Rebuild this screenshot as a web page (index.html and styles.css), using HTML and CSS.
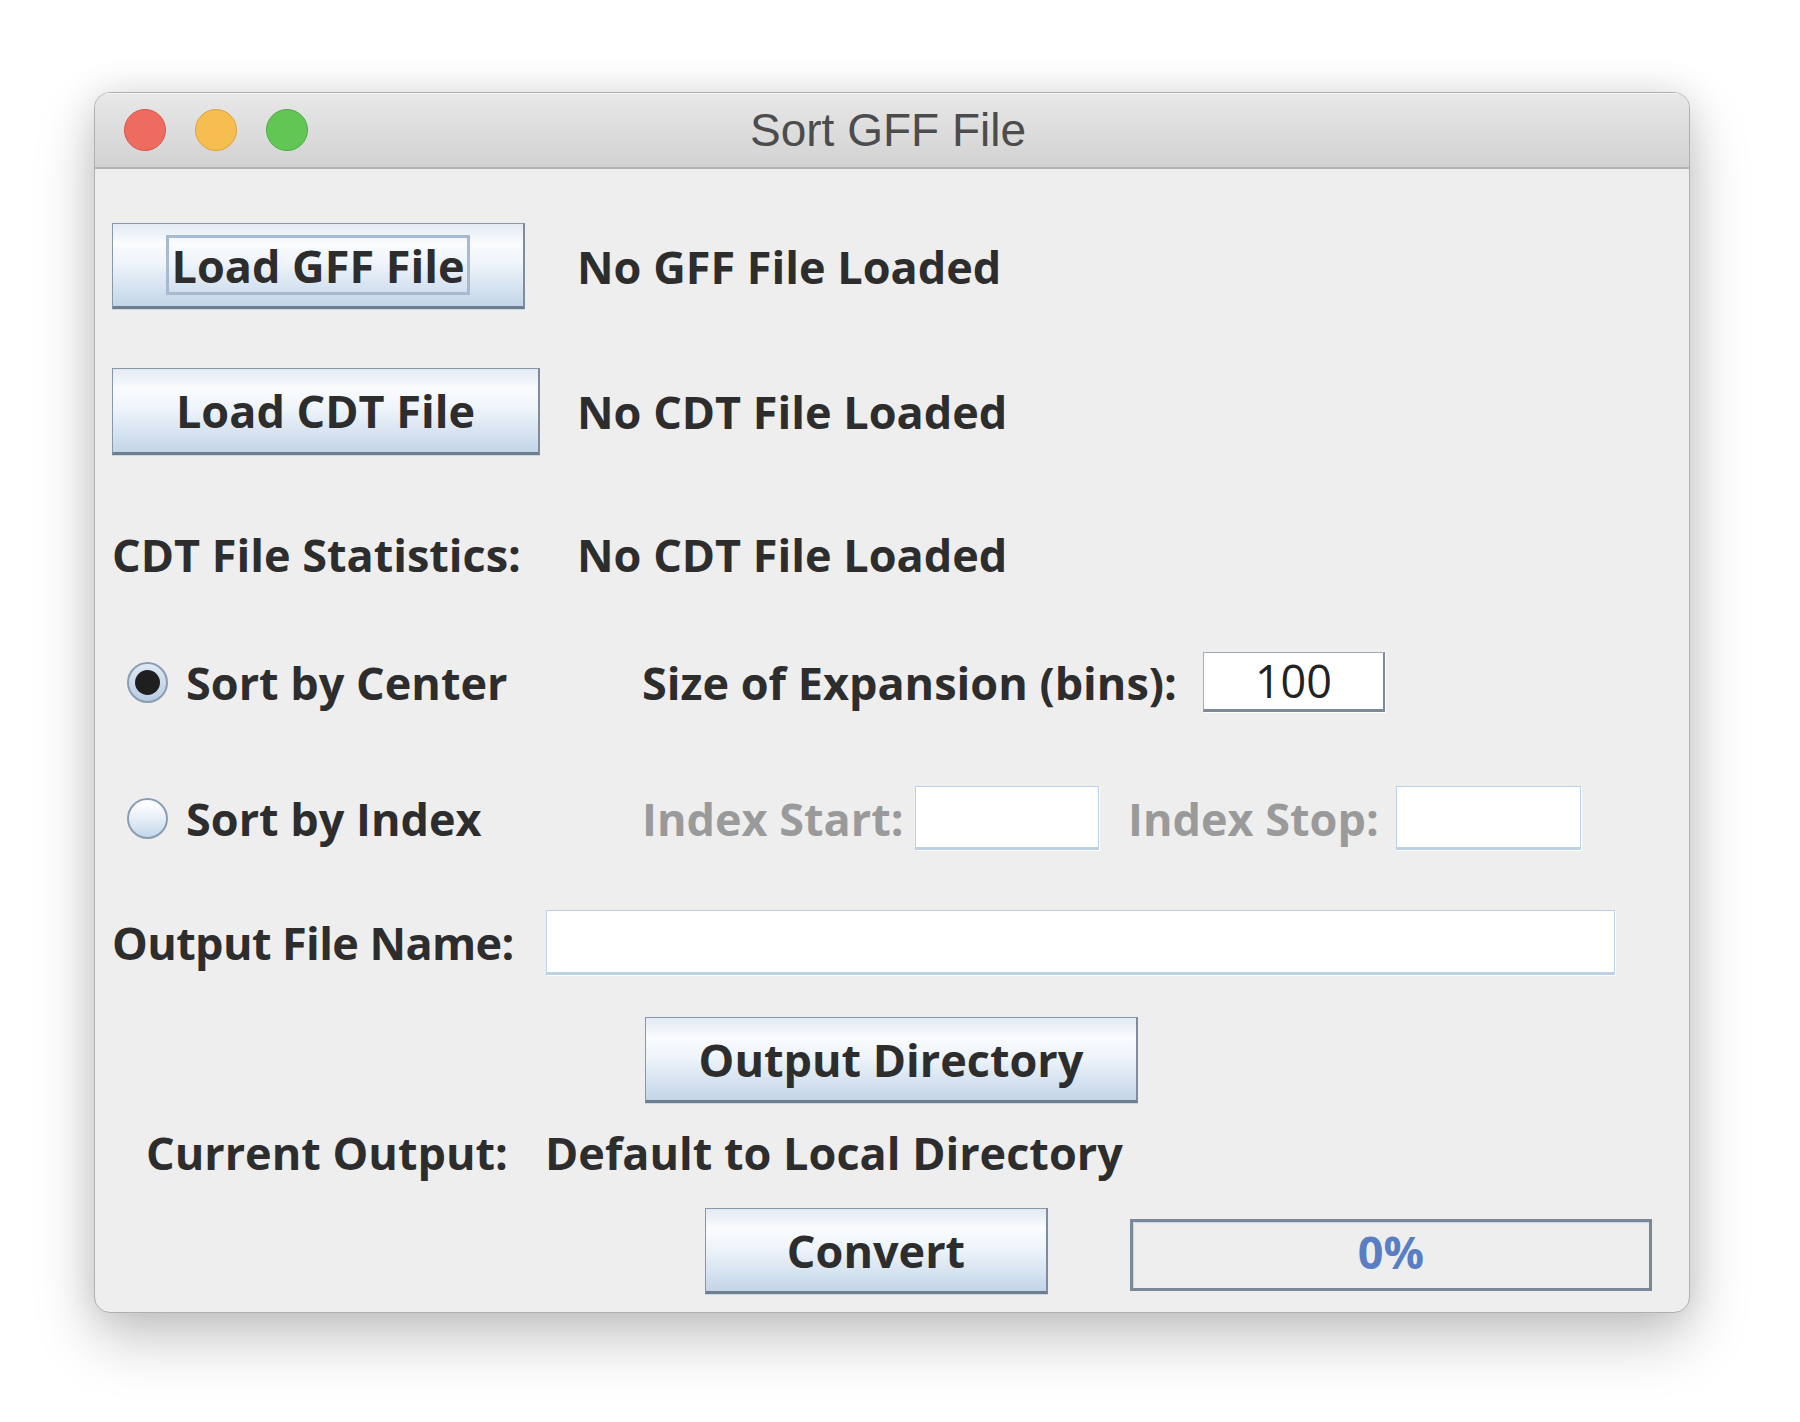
FILE: index.html
```html
<!DOCTYPE html>
<html>
<head>
<meta charset="utf-8">
<link rel="stylesheet" href="styles.css">
</head>
<body>
<div class="stage">
  <div class="window">
    <div class="titlebar">
      <div class="lights">
        <span class="tl red"></span>
        <span class="tl yellow"></span>
        <span class="tl green"></span>
      </div>
      <div class="title">Sort GFF File</div>
    </div>
    <div class="content">
      <div class="row r1">
        <div class="col1"><div class="btn btn-gff"><span class="focus">Load GFF File</span></div></div>
        <div class="label">No GFF File Loaded</div>
      </div>
      <div class="row r2">
        <div class="col1"><div class="btn btn-cdt">Load CDT File</div></div>
        <div class="label">No CDT File Loaded</div>
      </div>
      <div class="row r3">
        <div class="col1 label">CDT File Statistics:</div>
        <div class="label">No CDT File Loaded</div>
      </div>
      <div class="row r4">
        <div class="radio-group">
          <span class="radio on"></span>
          <span class="label">Sort by Center</span>
        </div>
        <div class="label lbl-size">Size of Expansion (bins):</div>
        <div class="field dark f-size">100</div>
      </div>
      <div class="row r5">
        <div class="radio-group">
          <span class="radio off"></span>
          <span class="label">Sort by Index</span>
        </div>
        <div class="label disabled lbl-start">Index Start:</div>
        <div class="field pale f-start"></div>
        <div class="label disabled lbl-stop">Index Stop:</div>
        <div class="field pale f-stop"></div>
      </div>
      <div class="row r6">
        <div class="label lbl-out">Output File Name:</div>
        <div class="field pale f-out"></div>
      </div>
      <div class="row r7">
        <div class="btn btn-dir">Output Directory</div>
      </div>
      <div class="row r8">
        <div class="label lbl-cur">Current Output:</div>
        <div class="label">Default to Local Directory</div>
      </div>
      <div class="row r9">
        <div class="btn btn-convert">Convert</div>
        <div class="progress">0%</div>
      </div>
    </div>
  </div>
</div>
</body>
</html>
```

FILE: styles.css
```css
html, body {
  margin: 0;
  padding: 0;
  background: #ffffff;
}

.stage {
  width: 1800px;
  height: 1422px;
  box-sizing: border-box;
  padding: 92px 0 0 94px;
  overflow: hidden;
}

.window {
  width: 1596px;
  height: 1221px;
  box-sizing: border-box;
  border: 1px solid #b0b0b0;
  border-radius: 16px;
  background: #eeeeee;
  overflow: hidden;
  box-shadow: 0 26px 60px rgba(0, 0, 0, 0.22), 0 0 36px rgba(0, 0, 0, 0.10);
  font-family: "Open Sans", "Liberation Sans", sans-serif;
  color: #2d2d2d;
}

.titlebar {
  height: 74px;
  border-bottom: 2px solid #b4b4b4;
  background: linear-gradient(#e8e8e8, #d2d2d2);
  box-shadow: inset 0 1px 0 #f5f5f5;
  display: grid;
  align-items: center;
}

.lights, .title {
  grid-area: 1 / 1;
}

.lights {
  display: flex;
  gap: 29px;
  padding-left: 29px;
}

.tl {
  width: 42px;
  height: 42px;
  border-radius: 50%;
  box-sizing: border-box;
}

.red { background: #ee6b60; border: 1px solid #d8564c; }
.yellow { background: #f6be50; border: 1px solid #dba33c; }
.green { background: #62c655; border: 1px solid #50ab45; }

.title {
  justify-self: center;
  font-family: "Liberation Sans", Arial, sans-serif;
  font-size: 46px;
  color: #4c4c4c;
  line-height: 1;
  padding-right: 8px;
}

.content {
  display: flex;
  flex-direction: column;
  padding-left: 17px;
}

.row {
  display: flex;
  align-items: center;
}

.r1 { margin-top: 54px; height: 86px; }
.r2 { margin-top: 59px; height: 87px; }
.r3 { margin-top: 69px; height: 60px; }
.r4 { margin-top: 68px; height: 60px; }
.r5 { margin-top: 74px; height: 64px; }
.r6 { margin-top: 60px; height: 65px; }
.r7 { margin-top: 42px; height: 86px; }
.r8 { margin-top: 19px; height: 60px; }
.r9 { margin-top: 26px; height: 86px; align-items: flex-start; }

.label {
  font-size: 45px;
  font-weight: 700;
  line-height: 45px;
  white-space: nowrap;
}

.disabled {
  color: #9a9a9a;
}

.col1 {
  width: 465px;
  flex: none;
}

.btn {
  box-sizing: border-box;
  height: 86px;
  border-top: 1px solid #8798aa;
  border-left: 1px solid #8798aa;
  border-right: 2px solid #7d8d9e;
  border-bottom: 3px solid #6f7e8e;
  background: linear-gradient(#e2eaf3 0%, #fafcfe 24%, #eef4fa 48%, #c3d5e9 100%);
  box-shadow: 0 1px 0 #cad9ea;
  display: flex;
  align-items: center;
  justify-content: center;
  font-size: 45px;
  font-weight: 700;
  line-height: 45px;
  white-space: nowrap;
  color: #2d2d2d;
  flex: none;
}

.btn-gff { width: 413px; }
.btn-cdt { width: 428px; height: 87px; }
.btn-dir { width: 493px; margin-left: 533px; }
.btn-convert { width: 343px; margin-left: 593px; }

.focus {
  box-sizing: border-box;
  height: 60px;
  padding: 0 2px;
  border: 3px solid #a8bacf;
  display: flex;
  align-items: center;
}

.radio-group {
  width: 530px;
  flex: none;
  display: flex;
  align-items: center;
}

.radio {
  width: 41px;
  height: 41px;
  margin-left: 15px;
  margin-right: 18px;
  border-radius: 50%;
  box-sizing: border-box;
  border: 2px solid #8a9db2;
  flex: none;
}

.radio.on {
  background: linear-gradient(#dfe8f2, #b9cde2);
  display: grid;
  place-items: center;
}

.radio.on::after {
  content: "";
  width: 25px;
  height: 25px;
  border-radius: 50%;
  background: #1f1f1f;
}

.radio.off {
  background: linear-gradient(#fbfcfe 15%, #e6eef7 50%, #c3d7ec 100%);
}

.field {
  box-sizing: border-box;
  background: #ffffff;
  flex: none;
}

.field.dark {
  border-top: 1px solid #a0acb9;
  border-left: 1px solid #a0acb9;
  border-right: 2px solid #7c8a9a;
  border-bottom: 3px solid #7c8a9a;
  box-shadow: 1px 1px 0 #ffffff;
}

.field.pale {
  border: 1px solid #bcd0e6;
  border-bottom: 3px solid #bcd0e6;
  box-shadow: 1px 1px 0 #ffffff;
}

.lbl-size { width: 561px; flex: none; }
.f-size {
  width: 182px;
  height: 60px;
  font-size: 45px;
  font-weight: 400;
  line-height: 56px;
  text-align: center;
  color: #222;
}

.lbl-start { width: 273px; flex: none; }
.f-start { width: 184px; height: 64px; }
.lbl-stop { width: 268px; margin-left: 29px; flex: none; }
.f-stop { width: 185px; height: 64px; }

.lbl-out { width: 434px; flex: none; letter-spacing: -0.6px; }
.f-out { width: 1069px; height: 65px; }

.lbl-cur { width: 399px; margin-left: 34px; flex: none; }

.progress {
  box-sizing: border-box;
  width: 522px;
  height: 72px;
  margin-top: 11px;
  margin-left: 82px;
  padding-bottom: 7px;
  border: 3px solid #7a8899;
  box-shadow: inset 1px 1px 0 #cbd8e6;
  background: #eeeeee;
  display: flex;
  align-items: center;
  justify-content: center;
  font-size: 45px;
  font-weight: 700;
  line-height: 45px;
  color: #5a7ec3;
  flex: none;
}
```
